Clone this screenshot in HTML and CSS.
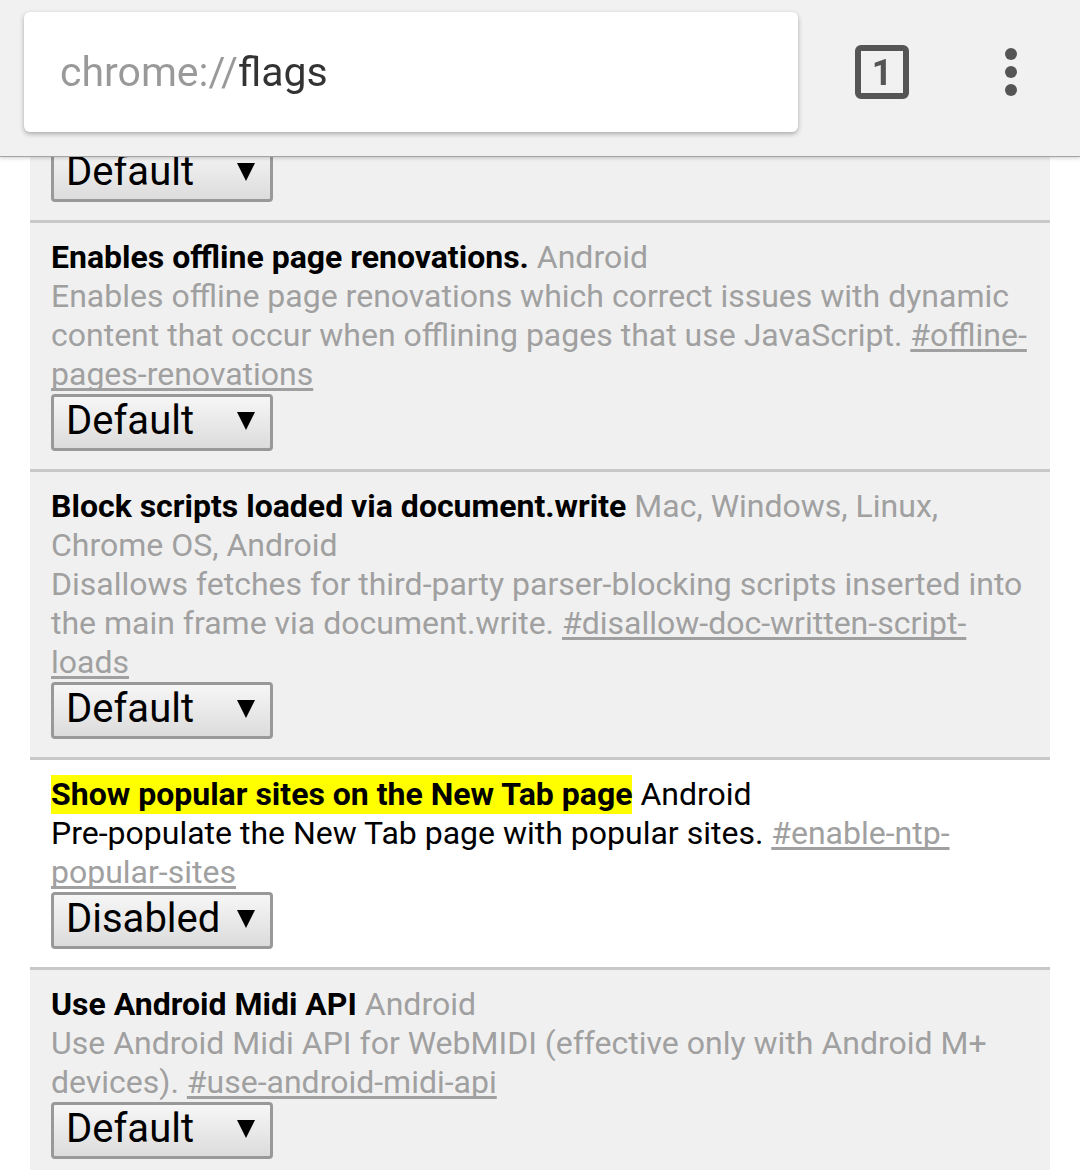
FILE: index.html
```html
<!DOCTYPE html>
<html lang="en">
<head>
    <meta charset="UTF-8">
    <meta name="viewport" content="width=device-width, initial-scale=1.0">
    <title>chrome://flags</title>
    <link rel="stylesheet" href="styles.css">
</head>
<body>
    <header class="toolbar">
        <form class="omnibox">
            <input class="url" type="text" value="chrome://flags" aria-label="Address" spellcheck="false">
        </form>
        <button class="tabs" type="button" aria-label="Open tabs">1</button>
        <button class="menu" type="button" aria-label="Menu">
            <svg width="12" height="48" viewBox="0 0 12 48" fill="#555">
                <circle cx="6" cy="6" r="6"/>
                <circle cx="6" cy="24" r="6"/>
                <circle cx="6" cy="42" r="6"/>
            </svg>
        </button>
    </header>

    <main class="flags">
        <div class="flag">
            <select class="choice" aria-label="Flag state">
                <option>Default</option>
                <option>Enabled</option>
                <option>Disabled</option>
            </select>
        </div>
        <div class="flag" id="offline-pages-renovations">
            <div>
                <label class="name" for="select1">Enables offline page renovations.</label>
                <span>Android</span>
            </div>
            <div>
                <span>Enables offline page renovations which correct issues with dynamic content that occur when offlining pages that use JavaScript.</span>
                <a class="permalink" href="#offline-pages-renovations">#offline-pages-renovations</a>
            </div>
            <select class="choice" id="select1">
                <option>Default</option>
                <option>Enabled</option>
                <option>Disabled</option>
            </select>
        </div>
        <div class="flag" id="disallow-doc-written-script-loads">
            <div>
                <label class="name" for="select2">Block scripts loaded via document.write</label>
                <span>Mac, Windows, Linux, Chrome OS, Android</span>
            </div>
            <div>
                <span>Disallows fetches for third-party parser-blocking scripts inserted into the main frame via document.write.</span>
                <a class="permalink" href="#disallow-doc-written-script-loads">#disallow-doc-written-script-loads</a>
            </div>
            <select class="choice" id="select2">
                <option>Default</option>
                <option>Enabled</option>
                <option>Disabled</option>
            </select>
        </div>
        <div class="flag changed" id="enable-ntp-popular-sites">
            <div>
                <label class="name" for="select3">Show popular sites on the New Tab page</label>
                <span>Android</span>
            </div>
            <div>
                <span>Pre-populate the New Tab page with popular sites.</span>
                <a class="permalink" href="#enable-ntp-popular-sites">#enable-ntp-popular-sites</a>
            </div>
            <select class="choice" id="select3">
                <option>Default</option>
                <option>Enabled</option>
                <option selected>Disabled</option>
            </select>
        </div>
        <div class="flag" id="use-android-midi-api">
            <div>
                <label class="name" for="select4">Use Android Midi API</label>
                <span>Android</span>
            </div>
            <div>
                <span>Use Android Midi API for WebMIDI (effective only with Android M+ devices).</span>
                <a class="permalink" href="#use-android-midi-api">#use-android-midi-api</a>
            </div>
            <select class="choice" id="select4">
                <option>Default</option>
                <option>Enabled</option>
                <option>Disabled</option>
            </select>
        </div>
    </main>
</body>
</html>
```
FILE: styles.css
```css
* {
    box-sizing: border-box;
}

html {
    scrollbar-width: none;
}

body {
    margin: 0;
    background-color: white;
    color: black;
    font-family: Roboto, sans-serif;
    font-size: 32px;
    line-height: 39px;
}

/* Browser toolbar, stays above the scrolled page */
.toolbar {
    position: fixed;
    top: 0;
    left: 0;
    right: 0;
    z-index: 1;
    display: flex;
    align-items: center;
    padding: 12px 24px 24px;
    background-color: #f1f1f1;
    border-bottom: 1px solid #a4a4a4;
    box-shadow: 0 1px 4px rgba(0, 0, 0, 0.2);
}

.omnibox {
    flex: 1;
    padding: 0 36px;
    background-color: white;
    border-radius: 6px;
    box-shadow: 0 2px 5px rgba(0, 0, 0, 0.3);
}

.url {
    display: block;
    width: 100%;
    height: 120px;
    padding: 0;
    border: none;
    outline: none;
    /* scheme is grey, the rest is dark */
    background: linear-gradient(to right, #999 177px, #333 177px);
    background-clip: text;
    -webkit-background-clip: text;
    color: transparent;
    caret-color: #333;
    font-family: inherit;
    font-size: 41px;
}

.tabs {
    width: 54px;
    height: 54px;
    margin: 0 72px 0 57px;
    padding: 0;
    background: none;
    border: 6px solid #555;
    border-radius: 6px;
    color: #555;
    font-family: inherit;
    font-size: 36px;
    font-weight: bold;
    line-height: 44px;
}

.menu {
    display: flex;
    justify-content: center;
    width: 60px;
    padding: 0;
    margin-right: 15px;
    background: none;
    border: none;
}

.flags {
    padding: 127px 30px 0;
}

.flag {
    padding: 15px 21px 18px;
    background-color: #f0f0f0;
    border-top: 3px solid #c8c8c8;
    color: #a0a0a0;
}

.flag.changed {
    background-color: white;
    color: black;
}

.name {
    color: black;
    font-weight: bold;
}

.changed .name {
    display: inline-block;
    background-color: yellow;
}

.permalink {
    color: #a0a0a0;
    text-decoration-thickness: 3px;
    text-decoration-skip-ink: none;
    text-underline-offset: 3px;
}

.choice {
    display: block;
    appearance: none;
    width: 222px;
    height: 57px;
    padding: 0 12px 9px;
    border: 3px solid #999;
    border-radius: 4px;
    background: url("data:image/svg+xml,%3Csvg xmlns='http://www.w3.org/2000/svg' width='18' height='18'%3E%3Cpath d='M0 0h18L9 18z'/%3E%3C/svg%3E") no-repeat right 15px top 15px,
        linear-gradient(#f6f6f6, #dcdcdc);
    color: black;
    font-family: inherit;
    font-size: 40px;
}
```
